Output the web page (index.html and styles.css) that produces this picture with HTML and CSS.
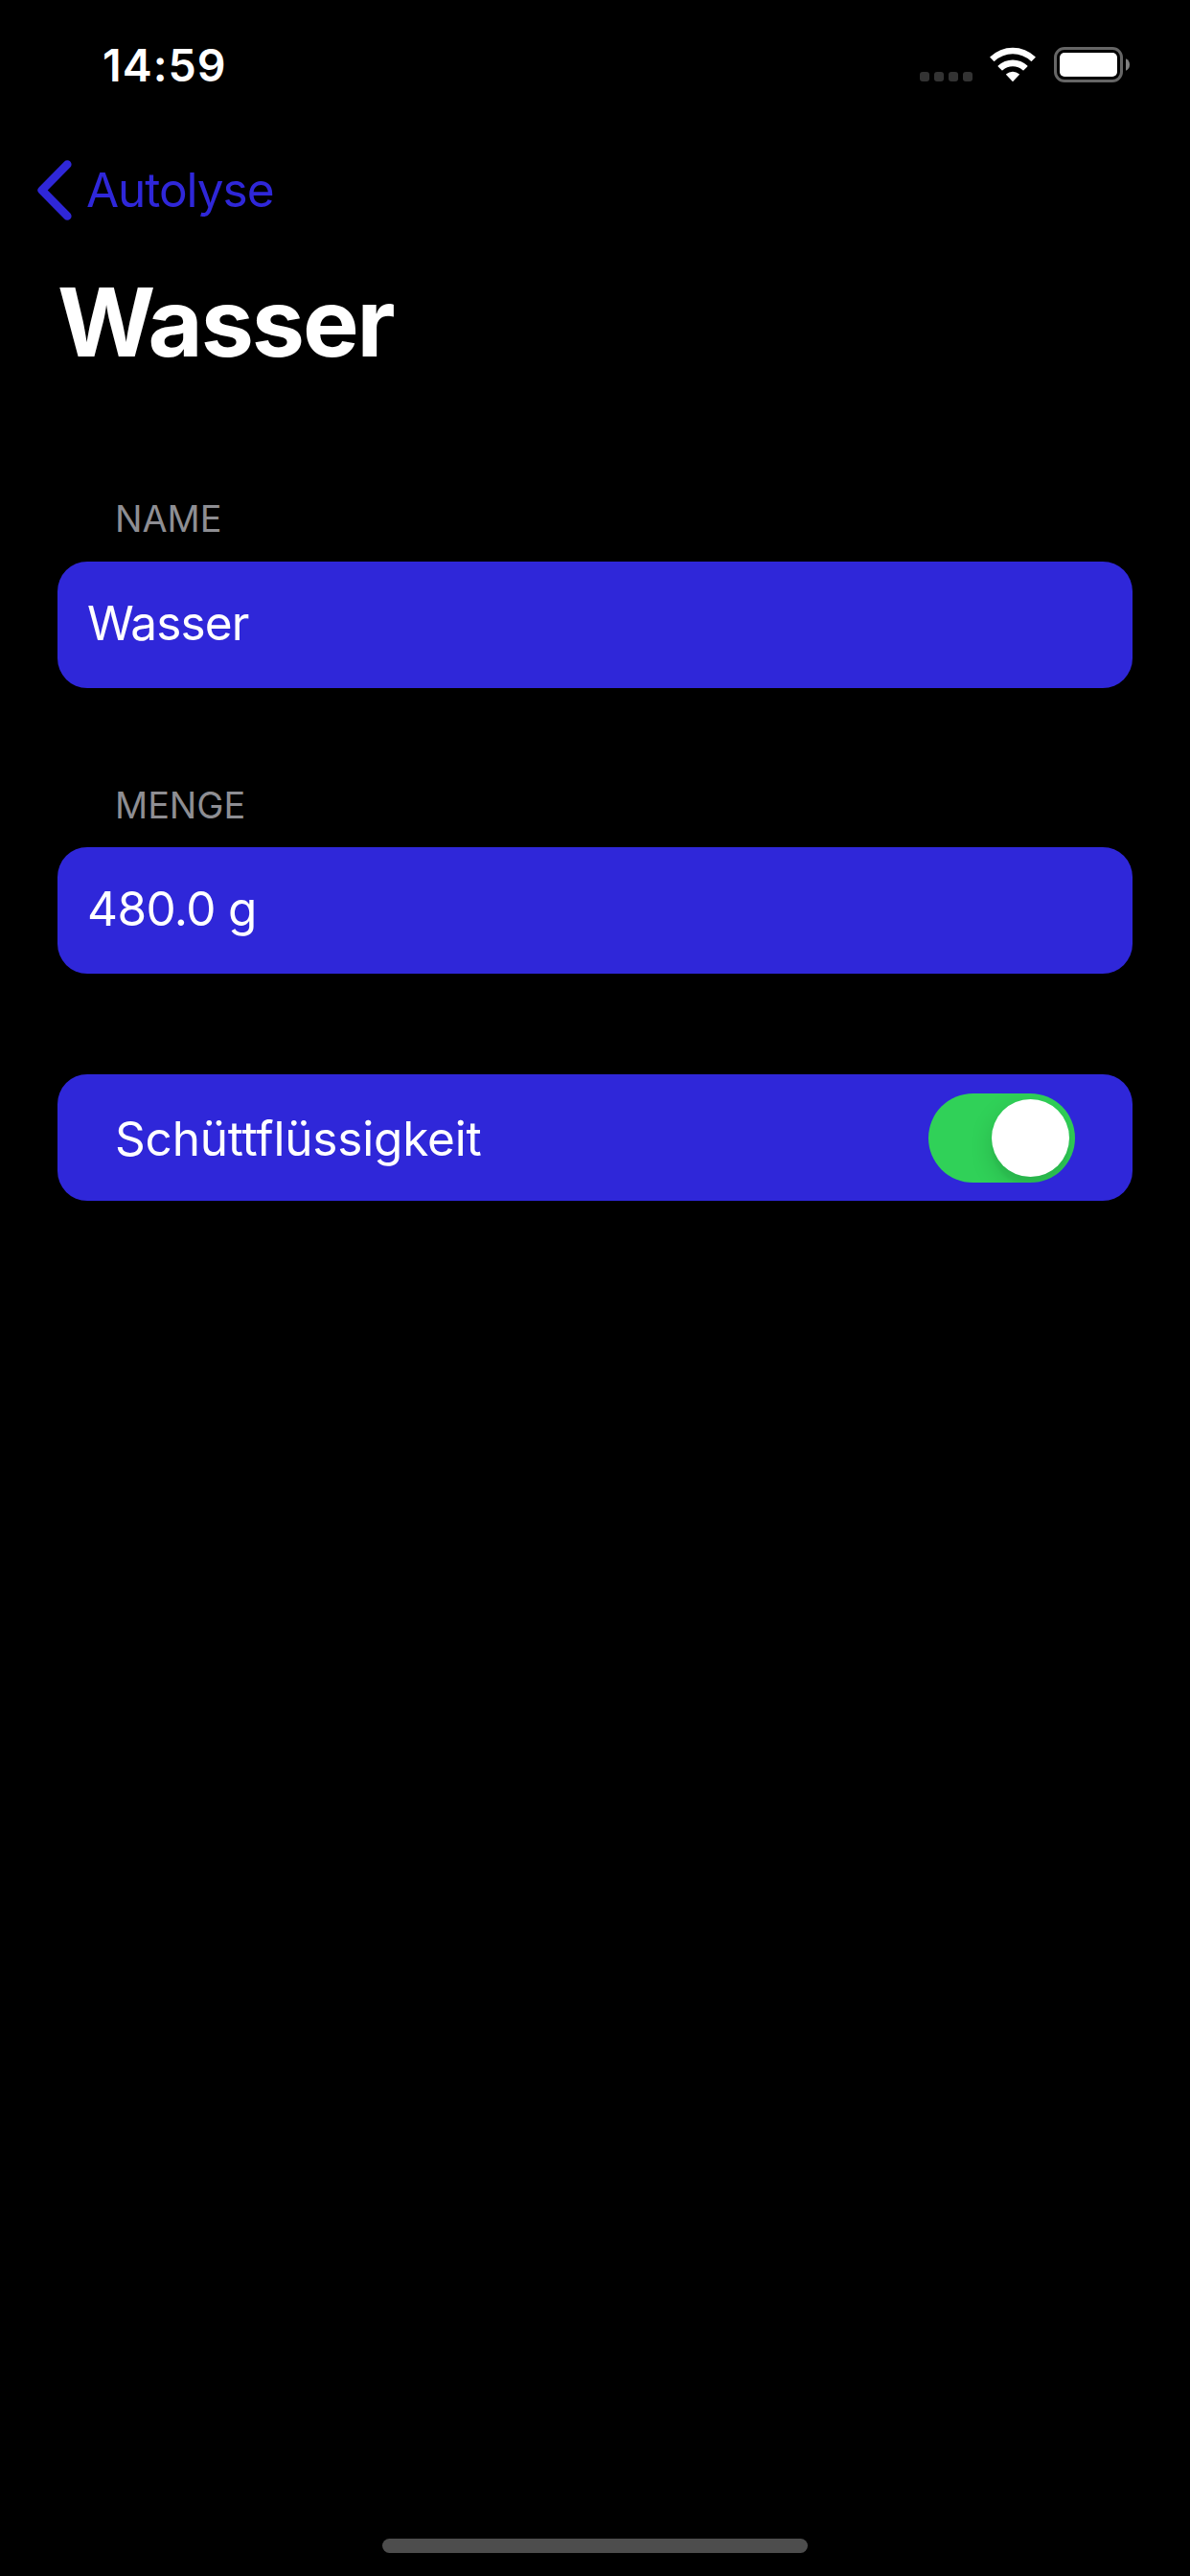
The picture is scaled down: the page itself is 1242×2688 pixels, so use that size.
FILE: index.html
```html
<!DOCTYPE html>
<html lang="de">
<head>
<meta charset="utf-8">
<title>Wasser</title>
<link rel="stylesheet" href="styles.css">
</head>
<body>
<div class="screen">
  <header class="status">
    <span class="time">14:59</span>
    <div class="indicators">
      <svg class="cellular" width="55" height="10" viewBox="0 0 55 10" fill="#333"><rect width="10" height="10" rx="3"/><rect x="15" width="10" height="10" rx="3"/><rect x="30" width="10" height="10" rx="3"/><rect x="45" width="10" height="10" rx="3"/></svg>
      <svg class="wifi" width="48" height="37" viewBox="0 0 48 37" fill="#fff"><path d="M.4 10.2A34 34 0 0 1 47.6 10.2Q48 10.6 47.6 11L43.9 14.7Q43.4 15.1 42.9 14.7A28 28 0 0 0 5.1 14.7Q4.6 15.1 4.1 14.7L.4 11Q0 10.6.4 10.2Z"/><path d="M8.7 19.6A22 22 0 0 1 39.3 19.6Q39.7 20 39.3 20.4L35.5 24.3Q35 24.8 34.5 24.3A15.5 15.5 0 0 0 13.5 24.3Q13 24.8 12.5 24.3L8.7 20.4Q8.3 20 8.7 19.6Z"/><path d="M17.2 28.2A10.5 10.5 0 0 1 30.8 28.2Q31.1 28.6 30.8 29L24.5 35.7Q24 36.2 23.5 35.7L17.2 29Q16.9 28.6 17.2 28.2Z"/></svg>
      <svg class="battery" width="80" height="37" viewBox="0 0 80 37"><rect x="1.5" y="1.5" width="69" height="34" rx="9.5" fill="none" stroke="#666" stroke-width="3"/><rect x="6" y="6" width="60" height="25" rx="5" fill="#fff"/><path d="M75 12.2Q79 14 79 18.5T75 24.8Z" fill="#808080"/></svg>
    </div>
  </header>
  <nav class="nav">
    <svg class="chevron" width="37" height="63" viewBox="0 0 37 63"><path d="M32.3 4.5L5.7 31.5L32.3 58.5" fill="none" stroke="#2f27d9" stroke-width="8.6" stroke-linecap="round" stroke-linejoin="round"/></svg>
    <span class="back">Autolyse</span>
  </nav>
  <h1 class="title">Wasser</h1>
  <main class="form">
    <section class="group">
      <h2 class="label label-name">NAME</h2>
      <div class="row"><span class="value value-name">Wasser</span></div>
    </section>
    <section class="group">
      <h2 class="label label-amount">MENGE</h2>
      <div class="row"><span class="value value-amount">480.0 g</span></div>
    </section>
    <section class="group">
      <div class="row row-toggle"><span class="option">Schüttflüssigkeit</span><span class="switch"><span class="knob"></span></span></div>
    </section>
  </main>
  <footer class="footer"><div class="home"></div></footer>
</div>
</body>
</html>
```
FILE: styles.css
```css
* { box-sizing: border-box; }
body { margin: 0; background: #000; }
.screen {
  width: 1242px;
  height: 2688px;
  display: flex;
  flex-direction: column;
  background: #000;
  color: #fff;
  font-family: Inter, "Liberation Sans", sans-serif;
  font-size: 49.5px;
  white-space: nowrap;
}
.status {
  height: 132px;
  padding: 49px 62px 0 107px;
  display: flex;
  justify-content: space-between;
  align-items: flex-start;
}
.time { font-size: 46.5px; font-weight: 600; line-height: 38px; letter-spacing: 1px; }
.indicators { display: flex; align-items: flex-end; height: 37px; }
.cellular { margin-bottom: 1px; }
.wifi { margin-left: 18px; }
.battery { margin-left: 19px; }
.nav {
  height: 132px;
  padding: 0 38px;
  display: flex;
  align-items: center;
  color: #2f27d9;
}
.back { margin-left: 15px; line-height: 60px; letter-spacing: -1.05px; }
.title {
  margin: 0;
  height: 156px;
  padding-left: 60px;
  font-size: 98.6px;
  font-weight: 700;
  line-height: 144px;
  letter-spacing: -2.1px;
}
.form { flex: 1; padding: 0 60px; }
.label {
  margin: 0;
  padding-left: 60px;
  font-size: 37.8px;
  font-weight: 400;
  line-height: 46px;
  color: #8e8e93;
}
.label-name { padding-top: 98px; height: 166px; }
.label-amount { padding-top: 99px; height: 166px; }
.row {
  height: 132px;
  padding: 0 60px 0 31px;
  display: flex;
  align-items: center;
  border-radius: 31px;
  background: #2f27d9;
}
.value { padding-bottom: 4px; }
.value-name { letter-spacing: -.9px; }
.value-amount { letter-spacing: -.6px; }
.row-toggle { margin-top: 105px; padding-left: 60px; justify-content: space-between; }
.option { padding-top: 2px; letter-spacing: -.2px; }
.switch {
  width: 153px;
  height: 93px;
  padding: 6px;
  display: flex;
  justify-content: flex-end;
  border-radius: 47px;
  overflow: hidden;
  background: #30d158;
}
.knob {
  width: 81px;
  height: 81px;
  border-radius: 50%;
  background: #fff;
  box-shadow: 0 9px 24px rgba(0, 0, 0, .15), 0 9px 3px rgba(0, 0, 0, .03);
}
.footer { height: 39px; display: flex; justify-content: center; }
.home { width: 444px; height: 15px; border-radius: 8px; background: #4d4d4d; }
```
